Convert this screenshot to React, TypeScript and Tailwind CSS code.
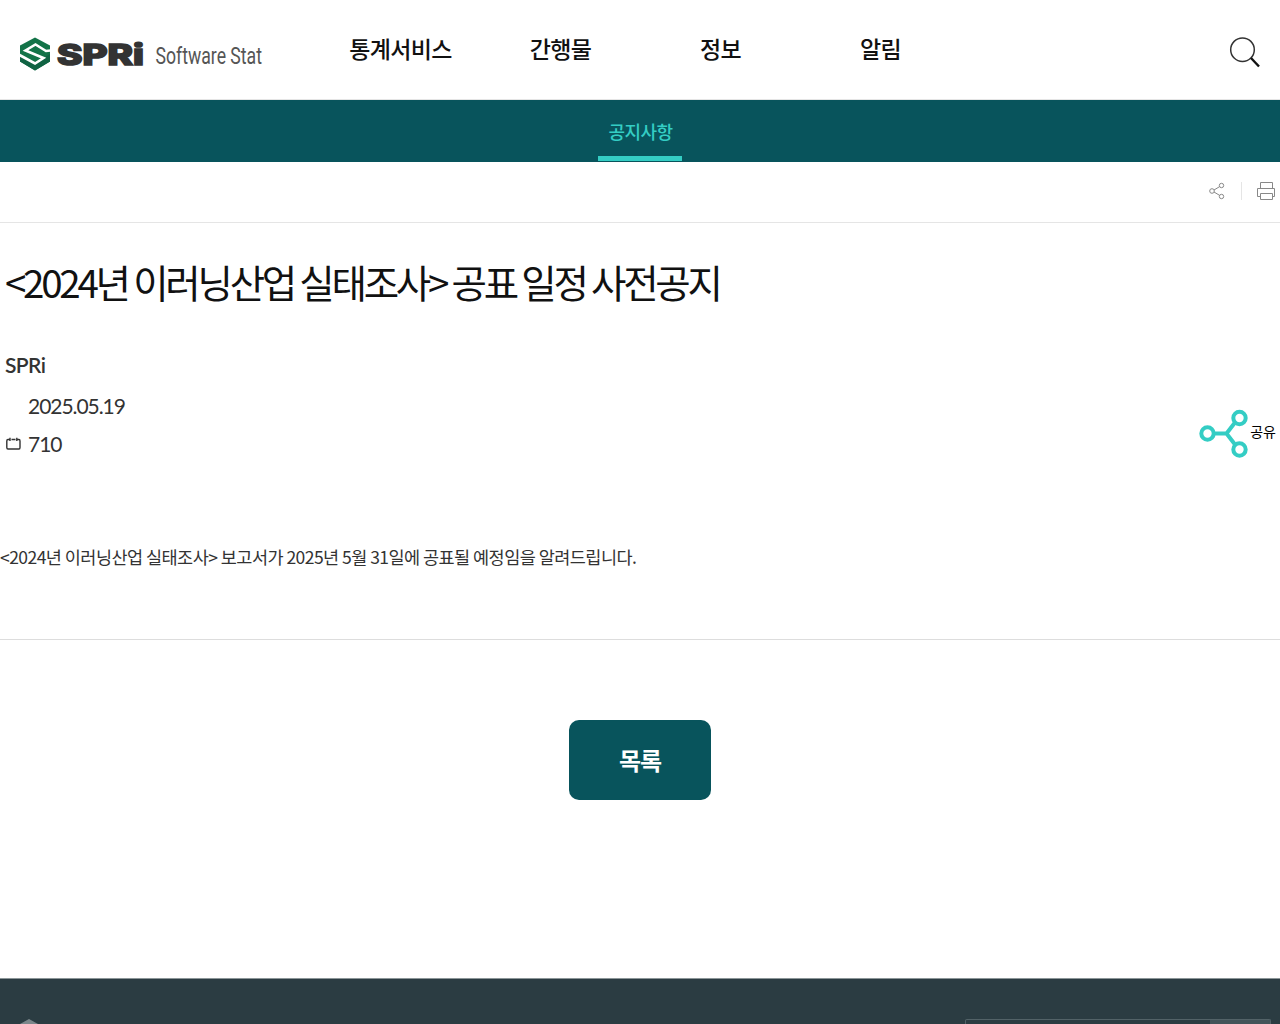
const menus = ['통계서비스', '간행물', '정보', '알림']

const Logo = () => (
  <svg width="300" height="50" viewBox="0 0 300 50" className="block overflow-visible">
    <path d="M35 13.500 L50 21.500 V37.500 L35 46.500 L20 37.500 V21.500 Z" fill="#137348" />
    <path d="M20 37.500 L35 46.500 L50 37.500 V30 L35 39 L20 33 Z" fill="#106343" />
    <path
      d="M50.500 26.500 L46 27 L35.500 20.500 L25.500 26.500 L43.500 34 L35 39.500 L19.500 31"
      fill="none"
      stroke="#fff"
      strokeWidth="2.600"
    />
    <text
      x="57"
      y="40.500"
      textLength="87"
      lengthAdjust="spacingAndGlyphs"
      className="font-['Inter'] text-[28px] font-extrabold"
      fill="#333"
      stroke="#333"
      strokeWidth="1.600"
    >
      SPRi
    </text>
    <text
      x="155.500"
      y="39.500"
      textLength="106.500"
      lengthAdjust="spacingAndGlyphs"
      className="font-['Roboto'] text-[23px] font-normal"
      fill="#555"
    >
      Software Stat
    </text>
  </svg>
)

const Header = () => (
  <header className="flex h-[100px] border-b border-[#e5e5e5]">
    <div className="w-[320px] pt-6">
      <Logo />
    </div>
    <nav className="flex h-full">
      {menus.map((item) => (
        <a
          key={item}
          className="w-40 pt-[30px] pl-px text-center text-[23px] leading-9 font-medium tracking-[-0.7px] text-[#111]"
        >
          {item}
        </a>
      ))}
    </nav>
    <button className="mt-[36px] mr-[19px] ml-auto h-8 w-8">
      <svg width="32" height="32" viewBox="0 0 32 32" fill="none" stroke="#333">
        <circle cx="13.500" cy="13.700" r="11.800" strokeWidth="1.500" />
        <path d="M22 22 L30 30.500" strokeWidth="2.400" stroke="#111" />
      </svg>
    </button>
  </header>
)

const PageTools = () => (
  <div className="flex h-[61px] items-start justify-end border-b border-[#e5e5e5] pr-1">
    <svg width="16" height="18" viewBox="0 0 16 18" fill="none" stroke="#888" className="mt-5">
      <circle cx="3" cy="9" r="2.300" />
      <circle cx="12.500" cy="3.500" r="2.200" />
      <circle cx="12.500" cy="14.500" r="2.200" />
      <path d="M5 8 L10.500 4.700 M5 10 L10.500 13.300" />
    </svg>
    <span className="mt-5 mr-[14px] ml-4 h-[18px] w-px bg-[#e5e5e5]" />
    <svg width="20" height="20" viewBox="0 0 20 20" fill="none" stroke="#888" className="mt-[19px]">
      <path d="M4.500 7.500 V1.500 H16.500 V7.500 M4.500 15.500 H1.500 V7.500 H18.500 V15.500 H16.500" />
      <path d="M4.500 12.500 H16.500 V18.500 H4.500 Z" />
    </svg>
  </div>
)

const ShareButton = () => (
  <button className="mt-[47px] flex h-[50px] items-center text-[14px] text-black">
    <svg width="50" height="50" viewBox="0 0 50 50" fill="none" stroke="#34cdc4" strokeWidth="4">
      <circle cx="8.500" cy="25.500" r="6.200" />
      <circle cx="40.500" cy="10" r="6.200" />
      <circle cx="40.500" cy="41.500" r="6.200" />
      <path d="M14.500 25.500 H27.500 M36 14.500 L27.500 25.500 L36 36.500" />
    </svg>
    <span className="mb-[3px] ml-px">공유</span>
  </button>
)

const Article = () => (
  <article>
    <h1 className="h-[121px] pt-[28px] pl-[5px] text-[38.5px] leading-[60px] tracking-[-3.25px] text-[#111]">
      <span>&lt;2024년 이러닝산업 실태조사&gt; 공표 일정 사전공지</span>
    </h1>
    <div className="flex h-[152px] justify-between pr-1 pl-[5px] font-['Lato','Noto_Sans_CJK_KR',sans-serif] text-[21px] text-[#333]">
      <div>
        <p className="pt-[6px] leading-[30px] font-semibold tracking-[-0.6px]">SPRi</p>
        <p className="mt-[11px] pl-[23px] leading-[30px] tracking-[-1.05px]">2025.05.19</p>
        <p className="mt-2 flex items-center leading-[30px] tracking-[-1.05px]">
          <svg width="16" height="16" viewBox="0 0 16 16" fill="none" stroke="#333" strokeWidth="1.400" className="mr-[7px]">
            <path d="M5 3.500 H3 Q1.800 3.500 1.800 5 V11.500 Q1.800 13 3 13 H14 Q15 13 15 11.500 V5 Q15 3.500 14 3.500 H12.500 M5 1.800 V5 M11.800 1.800 V5 M6.500 3.500 H10.500" />
          </svg>
          710
        </p>
      </div>
      <div className="pt-[17px] font-['Noto_Sans_CJK_KR',sans-serif]">
        <ShareButton />
      </div>
    </div>
    <div className="h-[144px] border-b border-[#ddd] pt-[46px] text-[17.5px] leading-[30px] tracking-[-0.54px] text-[#333]">
      <span>&lt;2024년 이러닝산업 실태조사&gt; 보고서가 2025년 5월 31일에 공표될 예정임을 알려드립니다.</span>
    </div>
  </article>
)

const Footer = () => (
  <footer className="flex h-[46px] items-end justify-between overflow-hidden border-t border-[#8c9698] bg-[#2b3c42] pr-[9px] pl-5">
    <svg width="18" height="5" viewBox="0 0 18 5">
      <path d="M0 5 L9 0 L18 5 Z" fill="#7b878b" />
    </svg>
    <div className="flex h-[5px] w-[306px] rounded-t-[2px] border border-b-0 border-[#526267]">
      <div className="flex-1" />
      <div className="w-[60px] bg-[#435359]" />
    </div>
  </footer>
)

const App = () => {
  return (
    <div className="h-[1024px] w-full overflow-hidden bg-white font-['Noto_Sans_CJK_KR',sans-serif]">
      <Header />
      <div className="flex h-[62px] justify-center bg-[#08545c]">
        <a className="h-[61px] w-[84px] border-b-[5px] border-[#34cdc4] pt-[16px] pl-px text-center text-[18px] leading-[30px] font-medium tracking-[-0.6px] text-[#34cdc4]">
          공지사항
        </a>
      </div>
      <PageTools />
      <Article />
      <div className="flex h-[338px] items-start justify-center pt-20">
        <button className="h-20 w-[142px] rounded-[10px] bg-[#08545c] text-[24px] font-bold tracking-[-1.2px] text-white">
          목록
        </button>
      </div>
      <Footer />
    </div>
  )
}

export default App
